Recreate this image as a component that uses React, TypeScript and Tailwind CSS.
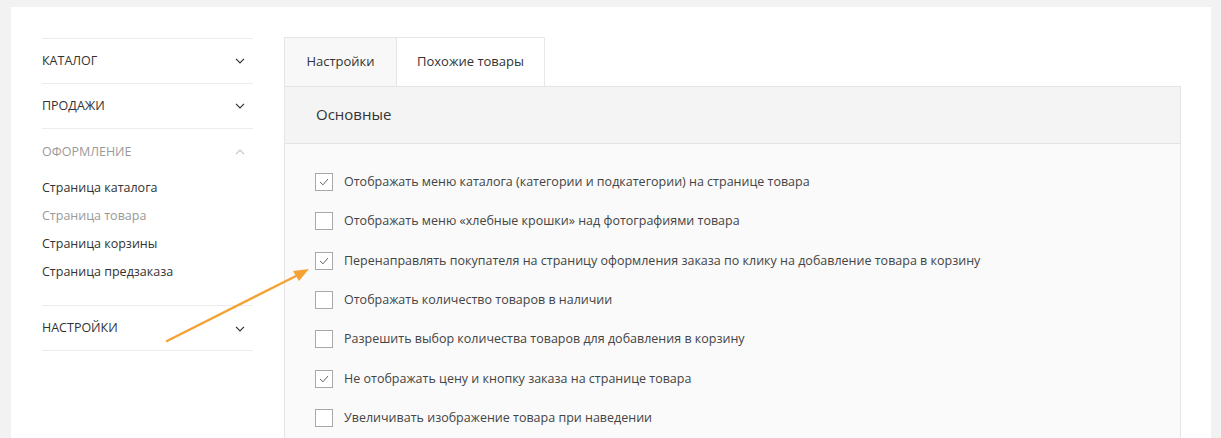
import React from 'react'

const font = { fontFamily: '"Open Sans", "Noto Sans", sans-serif' }

function Chevron({ up, muted }: { up?: boolean; muted?: boolean }) {
  return (
    <svg width="10" height="6" viewBox="0 0 10 6" fill="none">
      <path
        d={up ? 'M1 5.2L5 1.2L9 5.2' : 'M1 0.8L5 4.8L9 0.8'}
        stroke={muted ? '#c4c4c4' : '#333'}
        strokeWidth="1.2"
      />
    </svg>
  )
}

const options: [string, boolean][] = [
  ['Отображать меню каталога (категории и подкатегории) на странице товара', true],
  ['Отображать меню «хлебные крошки» над фотографиями товара', false],
  ['Перенаправлять покупателя на страницу оформления заказа по клику на добавление товара в корзину', true],
  ['Отображать количество товаров в наличии', false],
  ['Разрешить выбор количества товаров для добавления в корзину', false],
  ['Не отображать цену и кнопку заказа на странице товара', true],
  ['Увеличивать изображение товара при наведении', false],
]

function Checkbox({ checked }: { checked: boolean }) {
  return (
    <div className="w-[18px] h-[18px] border border-[#a9a9a9] bg-white flex items-center justify-center shrink-0">
      {checked && (
        <svg width="10" height="8" viewBox="0 0 10 8" fill="none">
          <path d="M1 4L4 6.8L9 1" stroke="#666" strokeWidth="1" />
        </svg>
      )}
    </div>
  )
}

function Sidebar() {
  return (
    <div className="w-[211px] shrink-0 border-t border-[#ececec] text-[12.5px]">
      <div className="h-[45px] flex items-center justify-between border-b border-[#ececec] pr-[8px]">
        <span className="text-[#333]">КАТАЛОГ</span>
        <Chevron />
      </div>
      <div className="h-[45px] flex items-center justify-between border-b border-[#ececec] pr-[8px]">
        <span className="text-[#333]">ПРОДАЖИ</span>
        <Chevron />
      </div>
      <div className="border-b border-[#ececec] pb-[19px] pt-px">
        <div className="h-[44px] flex items-center justify-between pr-[8px]">
          <span className="text-[#9a9a9a]">ОФОРМЛЕНИЕ</span>
          <Chevron up muted />
        </div>
        <div className="flex flex-col">
          <span className="h-[28px] leading-[28px] text-[#333]">Страница каталога</span>
          <span className="h-[28px] leading-[28px] text-[#999]">Страница товара</span>
          <span className="h-[28px] leading-[28px] text-[#333]">Страница корзины</span>
          <span className="h-[28px] leading-[28px] text-[#333]">Страница предзаказа</span>
        </div>
      </div>
      <div className="h-[45px] flex items-center justify-between border-b border-[#ececec] pr-[8px] pt-px">
        <span className="text-[#333]">НАСТРОЙКИ</span>
        <Chevron />
      </div>
    </div>
  )
}

export default function App() {
  return (
    <div className="relative min-h-[438px] bg-[#f2f2f2] pt-[7px] pl-[11px] pr-[10px] overflow-hidden" style={font}>
      <div className="bg-white h-[460px] flex pl-[31px] pr-[30px] pt-[31px] gap-[31px]">
        <Sidebar />
        <div className="flex-1 flex flex-col -mt-px">
          <div className="flex h-[49px] text-[13px] text-[#333]">
            <div className="w-[113px] flex items-center justify-center bg-[#f8f8f8] border border-b-0 border-[#e4e4e4]">
              Настройки
            </div>
            <div className="w-[148px] flex items-center justify-center bg-white border border-l-0 border-b-0 border-[#e8e8e8]">
              Похожие товары
            </div>
          </div>
          <div className="border border-[#e4e4e4] flex-1">
            <div className="h-[57px] bg-[#f4f4f4] border-b border-[#e4e4e4] flex items-center pl-[31px] text-[15px] text-[#333] pb-px">
              Основные
            </div>
            <div className="bg-[#fafafa] h-full pl-[30px] pt-[29px] flex flex-col gap-[21.33px]">
              {options.map(([label, checked]) => (
                <div key={label} className="flex items-center gap-[11px] h-[18px]">
                  <Checkbox checked={checked} />
                  <span className="text-[12.5px] text-[#444] whitespace-nowrap pt-px">{label}</span>
                </div>
              ))}
            </div>
          </div>
        </div>
      </div>
      <svg className="absolute left-0 top-0 pointer-events-none" width="1221" height="438">
        <line x1="167" y1="341" x2="298" y2="275" stroke="#f5a235" strokeWidth="2.5" strokeLinecap="round" />
        <path d="M309 269L293 271L299 281Z" fill="#f5a235" />
      </svg>
    </div>
  )
}
